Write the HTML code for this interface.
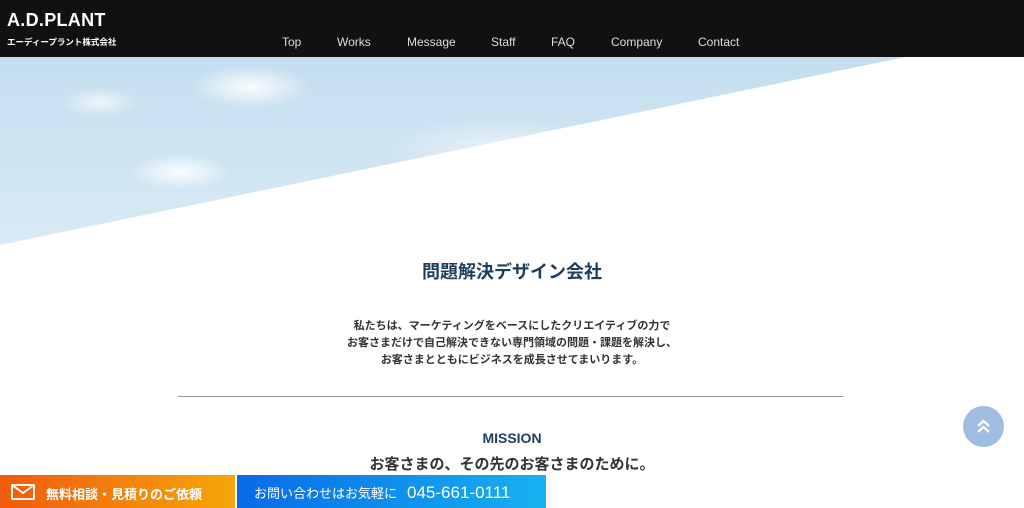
<!DOCTYPE html>
<html><head><meta charset="utf-8"><style>
*{margin:0;padding:0;box-sizing:border-box}
body{width:1024px;height:508px;overflow:hidden;background:#fff;font-family:"Liberation Sans","Noto Sans CJK JP",sans-serif;position:relative}
.hdr{position:absolute;left:0;top:0;width:1024px;height:57px;background:#111}
.logo{position:absolute;left:7px;top:10px;color:#fff;font-weight:bold;font-size:18px;letter-spacing:0.3px}
.sub{position:absolute;left:7px;top:36px;color:#fff;font-size:8.5px;font-weight:bold}
.nav{position:absolute;top:35px;color:#ddd;font-size:12px}
.sky{position:absolute;left:0;top:57px;width:1024px;height:190px;clip-path:polygon(0 0,905px 0,0 188px);
background:radial-gradient(ellipse 60px 22px at 250px 30px,rgba(255,255,255,.9),transparent),radial-gradient(ellipse 50px 18px at 180px 115px,rgba(255,255,255,.9),transparent),radial-gradient(ellipse 40px 15px at 100px 45px,rgba(255,255,255,.7),transparent),radial-gradient(ellipse 120px 30px at 500px 90px,rgba(255,255,255,.5),transparent),linear-gradient(180deg,#c4deef,#d8eaf5)}
h1{position:absolute;top:258px;width:1024px;text-align:center;font-size:18px;color:#1e3e5e;font-weight:bold}
.p{position:absolute;top:318px;width:1024px;text-align:center;font-size:11px;line-height:17px;color:#333;font-weight:bold}
.hr{position:absolute;left:178px;top:396px;width:665px;height:1px;background:#999}
.m{position:absolute;top:430px;width:1024px;text-align:center;font-size:14px;color:#1e3e5e;font-weight:bold}
.m2{position:absolute;top:453px;width:1024px;text-align:center;font-size:15px;color:#333;font-weight:bold}
.b1{position:absolute;left:0;top:475px;width:235px;height:33px;background:linear-gradient(90deg,#f05a0e,#f4a70a);color:#fff;font-size:13px;font-weight:bold;padding:9px 0 0 46px}
.b2{position:absolute;left:237px;top:475px;width:309px;height:33px;background:linear-gradient(90deg,#0a6ae6,#17b2f0);color:#fff;font-size:13px;padding:8px 0 0 17px}
.b2 span{font-size:17px;margin-left:10px}
.top{position:absolute;left:963px;top:406px;width:41px;height:41px;border-radius:50%;background:#9fbde2}
</style></head><body>
<div class="hdr">
<div class="logo">A.D.PLANT</div><div class="sub">エーディープラント株式会社</div>
<div class="nav" style="left:282px">Top</div>
<div class="nav" style="left:337px">Works</div>
<div class="nav" style="left:407px">Message</div>
<div class="nav" style="left:491px">Staff</div>
<div class="nav" style="left:551px">FAQ</div>
<div class="nav" style="left:611px">Company</div>
<div class="nav" style="left:698px">Contact</div>
</div>
<div class="sky"></div>
<h1>問題解決デザイン会社</h1>
<div class="p">私たちは、マーケティングをベースにしたクリエイティブの力で<br>お客さまだけで自己解決できない専門領域の問題・課題を解決し、<br>お客さまとともにビジネスを成長させてまいります。</div>
<div class="hr"></div>
<div class="m">MISSION</div>
<div class="m2">お客さまの、その先のお客さまのために。</div>
<div class="b1"><svg style="position:absolute;left:11px;top:9px" width="24" height="16" viewBox="0 0 24 16"><rect x="1" y="1" width="22" height="14" fill="none" stroke="#fff" stroke-width="1.8"/><path d="M1 1 L12 9 L23 1" fill="none" stroke="#fff" stroke-width="1.8"/></svg>無料相談・見積りのご依頼</div>
<div class="b2">お問い合わせはお気軽に<span>045-661-0111</span></div>
<div class="top"><svg width="41" height="41" viewBox="0 0 41 41"><path d="M15 20 L20.5 15 L26 20 M15 26 L20.5 21 L26 26" fill="none" stroke="#fff" stroke-width="2.2"/></svg></div>
</body></html>
